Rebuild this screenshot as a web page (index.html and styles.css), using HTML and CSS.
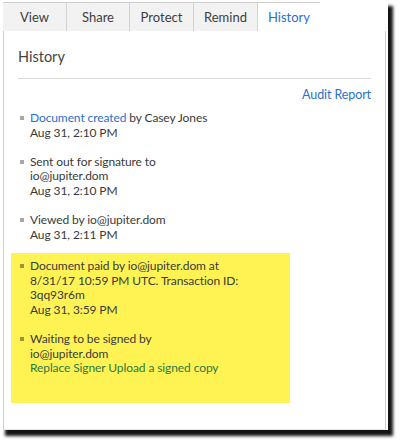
FILE: index.html
```html
<!DOCTYPE html>
<html>
<head>
<meta charset="utf-8">
<link rel="stylesheet" href="styles.css">
</head>
<body>
<div class="shot">
  <div class="tabs">
    <div class="tab">View</div>
    <div class="tab">Share</div>
    <div class="tab">Protect</div>
    <div class="tab">Remind</div>
    <div class="tab active">History</div>
  </div>
  <div class="panel">
    <h2 class="title">History</h2>
    <div class="audit"><a class="link">Audit Report</a></div>
    <ul class="events">
      <li><span><a class="link">Document created</a> by Casey Jones</span><span>Aug 31, 2:10 PM</span></li>
      <li><span>Sent out for signature to</span><span>io@jupiter.dom</span><span>Aug 31, 2:10 PM</span></li>
      <li><span>Viewed by io@jupiter.dom</span><span>Aug 31, 2:11 PM</span></li>
    </ul>
    <ul class="events highlight">
      <li><span>Document paid by io@jupiter.dom at</span><span>8/31/17 10:59 PM UTC. Transaction ID:</span><span>3qq93r6m</span><span>Aug 31, 3:59 PM</span></li>
      <li><span>Waiting to be signed by</span><span>io@jupiter.dom</span><span class="green">Replace Signer Upload a signed copy</span></li>
    </ul>
  </div>
</div>
</body>
</html>
```
FILE: styles.css
```css
* { box-sizing: border-box; }
html, body { margin: 0; padding: 0; background: #fff; }
body {
  width: 400px;
  height: 441px;
  overflow: hidden;
  font-family: Lato, "Open Sans", sans-serif;
  color: #3a3a3a;
}
.shot {
  width: 388px;
  height: 430px;
  background: #fff;
  box-shadow: 5px 6px 3px rgba(0, 0, 0, 0.92);
  padding: 2px 0 0 3px;
  display: flex;
  flex-direction: column;
}
.tabs {
  display: flex;
  height: 29px;
  border-top: 1px solid #cfcfcf;
  width: 317px;
}
.tab {
  width: 64px;
  background: #f2f2f2;
  border-right: 1px solid #d2d2d2;
  font-size: 13px;
  color: #3d3d3d;
  display: flex;
  align-items: center;
  justify-content: center;
  padding-bottom: 1px;
}
.tab:nth-child(2) { width: 63px; }
.tab.active {
  width: 62px;
  background: #fff;
  border-right: none;
  color: #2b6fcf;
}
.panel {
  flex: 1;
  border-left: 1px solid #cfcfcf;
  border-right: 1px solid #cfcfcf;
  border-bottom: 1px solid #e4e4e4;
  margin-right: 2px;
  padding: 0 14px 0 7px;
}
.title {
  margin: 0 0 0 7px;
  font-size: 14.5px;
  font-weight: normal;
  color: #444;
  padding: 17px 0 13px 0;
  border-bottom: 1px solid #d9d9d9;
}
.audit {
  text-align: right;
  font-size: 12.5px;
  padding-top: 8px;
  height: 26px;
  letter-spacing: -0.1px;
}
.link { color: #2b6fcf; }
.events {
  list-style: none;
  margin: 6px 0 0 0;
  padding: 0 0 0 9px;
  font-size: 12px;
  letter-spacing: -0.1px;
  line-height: 14.6px;
}
.events li {
  display: flex;
  flex-direction: column;
  position: relative;
  padding-left: 10px;
  margin-bottom: 14.6px;
}
.events li::before {
  content: "";
  position: absolute;
  left: 0;
  top: 5px;
  width: 4px;
  height: 4px;
  background: #a8a8a8;
}
.highlight {
  background: #fff354;
  width: 279px;
  margin-top: -4px;
  padding: 6px 0 20px 9px;
  height: 150px;
}
.highlight li::before { background: #9a9440; }
.green { color: #2c7a3e; }
```
